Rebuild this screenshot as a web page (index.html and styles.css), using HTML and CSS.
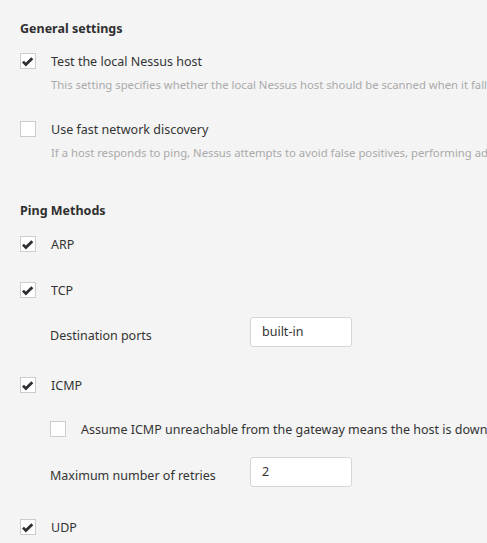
FILE: index.html
```html
<!DOCTYPE html>
<html lang="en">
<head>
<meta charset="utf-8">
<title>Discovery settings</title>
<link rel="stylesheet" href="styles.css">
</head>
<body>
<main class="page">
  <section class="group group-general">
    <h2 class="group-title">General settings</h2>
    <div class="option">
      <div class="check-row">
        <span class="box checked"><svg viewBox="0 0 16 16" width="16" height="16"><path d="M3 8.6 L5.9 11.6 L12.3 5.2" /></svg></span>
        <span class="label">Test the local Nessus host</span>
      </div>
      <p class="desc">This setting specifies whether the local Nessus host should be scanned when it falls within the target range specified for the scan.</p>
    </div>
    <div class="option option-second">
      <div class="check-row">
        <span class="box"></span>
        <span class="label">Use fast network discovery</span>
      </div>
      <p class="desc">If a host responds to ping, Nessus attempts to avoid false positives, performing additional tests to verify the response.</p>
    </div>
  </section>

  <section class="group group-ping">
    <h2 class="group-title">Ping Methods</h2>
    <div class="check-row row-arp">
      <span class="box checked"><svg viewBox="0 0 16 16" width="16" height="16"><path d="M3 8.6 L5.9 11.6 L12.3 5.2" /></svg></span>
      <span class="label">ARP</span>
    </div>
    <div class="check-row row-tcp">
      <span class="box checked"><svg viewBox="0 0 16 16" width="16" height="16"><path d="M3 8.6 L5.9 11.6 L12.3 5.2" /></svg></span>
      <span class="label">TCP</span>
    </div>
    <div class="field row-ports">
      <span class="field-label">Destination ports</span>
      <span class="input">built-in</span>
    </div>
    <div class="check-row row-icmp">
      <span class="box checked"><svg viewBox="0 0 16 16" width="16" height="16"><path d="M3 8.6 L5.9 11.6 L12.3 5.2" /></svg></span>
      <span class="label">ICMP</span>
    </div>
    <div class="check-row sub row-unreach">
      <span class="box"></span>
      <span class="label">Assume ICMP unreachable from the gateway means the host is down</span>
    </div>
    <div class="field row-retries">
      <span class="field-label">Maximum number of retries</span>
      <span class="input">2</span>
    </div>
    <div class="check-row row-udp">
      <span class="box checked"><svg viewBox="0 0 16 16" width="16" height="16"><path d="M3 8.6 L5.9 11.6 L12.3 5.2" /></svg></span>
      <span class="label">UDP</span>
    </div>
  </section>
</main>
</body>
</html>
```

FILE: styles.css
```css
html, body {
  margin: 0;
  padding: 0;
  background: #f4f4f4;
  overflow: hidden;
}

body {
  font-family: "Noto Sans", "Open Sans", sans-serif;
  font-size: 12.5px;
  color: #333;
}

.page {
  padding: 17px 0 0 20px;
  width: 467px;
  overflow: hidden;
}

.group-title {
  margin: 0;
  padding-top: 2px;
  font-size: 12.5px;
  font-weight: bold;
  line-height: 20px;
  color: #2f2f2f;
}

.group-general .option:first-of-type {
  margin-top: 14px;
}

.option-second {
  margin-top: 28px;
}

.check-row {
  display: flex;
  align-items: center;
  height: 16px;
  white-space: nowrap;
}

.box {
  flex: none;
  width: 14px;
  height: 14px;
  border: 1px solid #cdcdcd;
  background: #fff;
  position: relative;
  margin-right: 15px;
}

.box svg {
  position: absolute;
  left: -1px;
  top: -1px;
}

.box svg path {
  fill: none;
  stroke: #2e2e33;
  stroke-width: 2.8;
  stroke-linecap: butt;
  stroke-linejoin: miter;
}

.label {
  line-height: 16px;
  margin-top: 2px;
}

.desc {
  margin: 8px 0 0 31px;
  line-height: 16px;
  font-size: 11.3px;
  color: #aaa;
  white-space: nowrap;
}

.group-ping {
  margin-top: 38px;
}

.row-arp { margin-top: 15px; }
.row-tcp { margin-top: 30px; }

.field {
  display: flex;
  align-items: center;
  height: 30px;
  padding-left: 30px;
}

.field-label {
  width: 200px;
  flex: none;
  padding-top: 7px;
}

.input {
  box-sizing: border-box;
  width: 102px;
  height: 30px;
  background: #fff;
  border: 1px solid #d6d6d6;
  border-radius: 3px;
  padding: 0 11px;
  line-height: 28px;
}

.row-ports { margin-top: 19px; }
.row-icmp { margin-top: 30px; }
.sub { padding-left: 30px; }
.row-unreach { margin-top: 28px; }
.row-retries { margin-top: 20px; }
.row-udp { margin-top: 32px; }
```
